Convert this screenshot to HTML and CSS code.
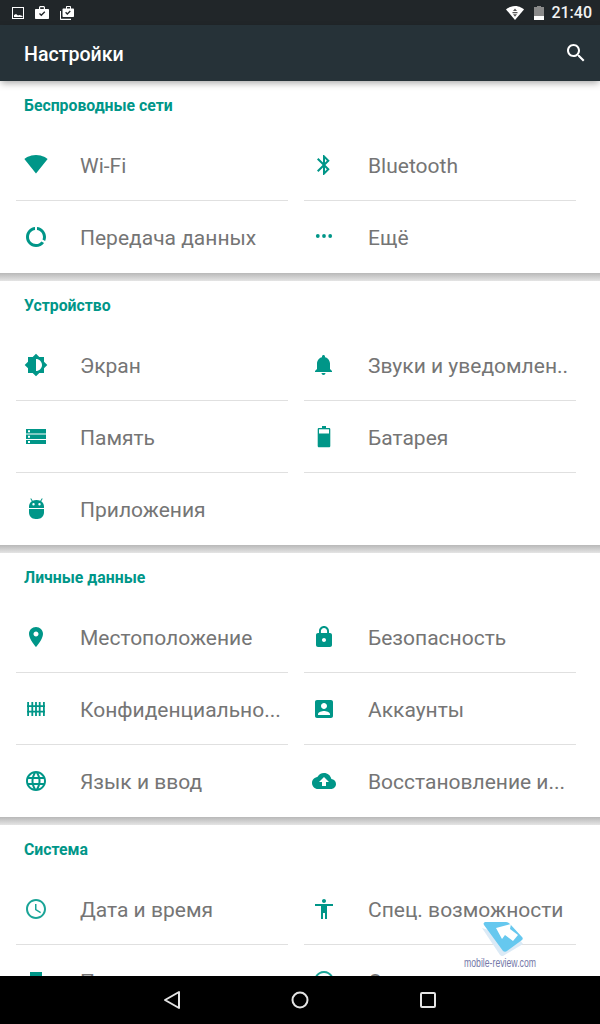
FILE: index.html
```html
<!DOCTYPE html>
<html>

<head>
    <title>Настройки</title>
    <link rel="stylesheet" href="styles.css">
</head>

<body>
    <div id="phone">
        <div class="statusbar">
            <div class="status-left">
                <svg width="12" height="12" viewBox="0 0 12 12"><path class="st-white" fill-rule="evenodd" d="M0 0h12v12H0zM1 1v10h10V1z"/><path class="st-white" d="M2 10V8l2-1 2 1.500 1.500-.5 3 1v1z"/></svg>
                <svg width="14" height="13" viewBox="0 0 14 13"><path class="st-white" fill-rule="evenodd" d="M1 3h3V1.500C4 .7 4.700 0 5.500 0h3C9.300 0 10 .7 10 1.500V3h3c.6 0 1 .4 1 1v8c0 .6-.4 1-1 1H1c-.6 0-1-.4-1-1V4c0-.6.4-1 1-1zm4.200 0h3.600V1.200H5.200z"/><path class="st-check" d="M4.500 7.500L6.300 9.300 9.800 5.800"/></svg>
                <svg width="14" height="14" viewBox="0 0 14 14"><path class="st-white" d="M0 5h1v7.800h10V14H1c-.6 0-1-.4-1-1z"/><path class="st-white" fill-rule="evenodd" d="M3.500 2.500H6V1c0-.6.4-1 1-1h3c.6 0 1 .4 1 1v1.500h2c.6 0 1 .4 1 1V10c0 .6-.4 1-1 1H3.500c-.6 0-1-.4-1-1V3.500c0-.6.4-1 1-1zM7 2.500h3V1.100H7z"/><path class="st-check" d="M5.600 6.300l1.700 1.700 3-3"/></svg>
            </div>
            <div class="status-right">
                <svg width="18" height="14" viewBox="0 0 18 14"><path class="st-white" d="M9 14L0 3.400C1 2.600 4.400 0 9 0s8 2.600 9 3.400z"/><path class="st-dark" d="M9 2.500L11 5H7zM6.500 6h5v1.200h-5zM7 8.200h4L9 10.700z"/></svg>
                <svg class="battery" width="10" height="14" viewBox="0 0 10 14"><path fill="#8a8a8a" d="M3 0h4v1h3v9H0V1h3z"/><path fill="#fff" d="M0 10h10v4H0z"/></svg>
                <span class="clock">21:40</span>
            </div>
        </div>

        <div class="appbar">
            <span class="appbar-title">Настройки</span>
            <svg class="search" width="24" height="24" viewBox="0 0 24 24"><path d="M15.500 14h-.79l-.28-.27C15.410 12.590 16 11.110 16 9.500 16 5.910 13.090 3 9.500 3S3 5.910 3 9.500 5.910 16 9.500 16c1.610 0 3.090-.59 4.230-1.570l.27.28v.79l5 4.990L20.490 19l-4.990-5zm-6 0C7.010 14 5 11.990 5 9.500S7.010 5 9.500 5 14 7.010 14 9.500 11.990 14 9.500 14z"/></svg>
        </div>

        <div class="content">
            <div class="group">
                <div class="group-title">Беспроводные сети</div>
                <div class="rows">
                    <div class="row line">
                        <svg class="icon" viewBox="0 0 24 24"><path d="M12.010 20.490L23.640 6c-.45-.34-4.930-4-11.640-4C5.280 2 .81 5.660.36 6l11.630 14.490.01.01.01-.01z"/></svg>
                        <span class="label">Wi-Fi</span>
                    </div>
                    <div class="row line">
                        <svg class="icon" viewBox="0 0 24 24"><path d="M17.710 7.710L12 2h-1v7.590L6.410 5 5 6.410 10.590 12 5 17.590 6.410 19 11 14.410V22h1l5.710-5.710-4.300-4.290 4.300-4.290zM13 5.830l1.880 1.880L13 9.590V5.830zm1.880 10.460L13 18.170v-3.760l1.880 1.880z"/></svg>
                        <span class="label">Bluetooth</span>
                    </div>
                    <div class="row">
                        <svg class="icon" viewBox="0 0 24 24"><path d="M13 2.050v3.030c3.390.49 6 3.390 6 6.920 0 .9-.18 1.750-.48 2.540l2.600 1.530c.56-1.240.88-2.620.88-4.070 0-5.180-3.950-9.450-9-9.950zM12 19c-3.870 0-7-3.130-7-7 0-3.530 2.610-6.430 6-6.920V2.050c-5.060.5-9 4.760-9 9.950 0 5.520 4.470 10 9.990 10 3.310 0 6.240-1.610 8.060-4.090l-2.600-1.530C16.170 17.980 14.210 19 12 19z"/></svg>
                        <span class="label">Передача данных</span>
                    </div>
                    <div class="row">
                        <svg class="icon" viewBox="0 0 24 24"><circle cx="5.800" cy="11" r="1.900"/><circle cx="12" cy="11" r="1.900"/><circle cx="18.200" cy="11" r="1.900"/></svg>
                        <span class="label">Ещё</span>
                    </div>
                </div>
            </div>
            <div class="shade"></div>

            <div class="group">
                <div class="group-title">Устройство</div>
                <div class="rows">
                    <div class="row line">
                        <svg class="icon" viewBox="0 0 24 24"><path d="M20 15.310L23.310 12 20 8.690V4h-4.690L12 .69 8.690 4H4v4.690L.69 12 4 15.310V20h4.690L12 23.310 15.310 20H20v-4.690zM12 18V6c3.310 0 6 2.690 6 6s-2.690 6-6 6z"/></svg>
                        <span class="label">Экран</span>
                    </div>
                    <div class="row line">
                        <svg class="icon" viewBox="0 0 24 24"><path d="M11.500 22c1.100 0 2-.9 2-2h-4c0 1.100.9 2 2 2zm6.500-6v-5.500c0-3.070-2.130-5.640-5-6.320V3.500c0-.83-.67-1.500-1.500-1.500S10 2.670 10 3.500v.68c-2.870.68-5 3.250-5 6.320V16l-2 2v1h17v-1l-2-2z"/></svg>
                        <span class="label">Звуки и уведомлен..</span>
                    </div>
                    <div class="row line">
                        <svg class="icon" viewBox="0 0 24 24"><path fill-rule="evenodd" d="M2 4h20v4.500H2zm2 1.300v2h2v-2zM2 9.500h20V14H2zm2 1.300v2h2v-2zM2 15h20v4H2zm2 1v2h2v-2z"/></svg>
                        <span class="label">Память</span>
                    </div>
                    <div class="row line">
                        <svg class="icon" viewBox="0 0 24 24"><path d="M10 1h4v2h3c.8 0 1.300.5 1.300 1.300V21c0 .7-.6 1.300-1.300 1.300H7c-.7 0-1.300-.6-1.300-1.300V4.300C5.700 3.500 6.200 3 7 3h3z"/><path fill="#fff" d="M7 4.300h10V8.500H7z"/></svg>
                        <span class="label">Батарея</span>
                    </div>
                    <div class="row">
                        <svg class="icon" viewBox="0 0 24 24"><path d="M5 11v-1.500c0-2.300 1.100-4.200 2.800-5.300L6.300 1.700l.8-.5 1.600 2.500C9.800 3.200 11 3 12.500 3s2.700.2 3.800.7l1.600-2.500.8.5-1.500 2.500C18.900 5.300 20 7.200 20 9.500V11zm4.500-2.500a1.200 1.200 0 1 0 0-2.400 1.200 1.200 0 0 0 0 2.400zm6 0a1.200 1.200 0 1 0 0-2.400 1.200 1.200 0 0 0 0 2.400zM5 12h15v3.500c0 3.600-2.900 6.500-6.500 6.500h-2C7.900 22 5 19.100 5 15.500z"/></svg>
                        <span class="label">Приложения</span>
                    </div>
                </div>
            </div>
            <div class="shade"></div>

            <div class="group">
                <div class="group-title">Личные данные</div>
                <div class="rows">
                    <div class="row line">
                        <svg class="icon" viewBox="0 0 24 24"><path d="M12 2C8.130 2 5 5.130 5 9c0 5.250 7 13 7 13s7-7.750 7-13c0-3.870-3.130-7-7-7zm0 9.500c-1.380 0-2.500-1.120-2.500-2.500s1.120-2.500 2.500-2.500 2.500 1.120 2.500 2.500-1.120 2.500-2.500 2.500z"/></svg>
                        <span class="label">Местоположение</span>
                    </div>
                    <div class="row line">
                        <svg class="icon" viewBox="0 0 24 24"><path d="M18 8h-1V6c0-2.760-2.240-5-5-5S7 3.240 7 6v2H6c-1.100 0-2 .9-2 2v10c0 1.100.9 2 2 2h12c1.100 0 2-.9 2-2V10c0-1.100-.9-2-2-2zm-6 9c-1.100 0-2-.9-2-2s.9-2 2-2 2 .9 2 2-.9 2-2 2zm3.100-9H8.900V6c0-1.710 1.390-3.100 3.100-3.100 1.710 0 3.100 1.390 3.100 3.100v2z"/></svg>
                        <span class="label">Безопасность</span>
                    </div>
                    <div class="row line">
                        <svg class="icon" viewBox="0 0 24 24"><path d="M3.200 5H5v14H3.200zM7.400 5h1.800v14H7.400zM11.100 5h1.800v14h-1.800zM14.800 5h1.800v14h-1.800zM19 5h1.800v14H19zM3 8.300h18v1.800H3zM3 13.700h18v1.800H3z"/></svg>
                        <span class="label">Конфиденциально...</span>
                    </div>
                    <div class="row line">
                        <svg class="icon" viewBox="0 0 24 24"><path d="M3 5v14c0 1.100.89 2 2 2h14c1.100 0 2-.9 2-2V5c0-1.100-.9-2-2-2H5c-1.110 0-2 .9-2 2zm12 4c0 1.660-1.340 3-3 3s-3-1.340-3-3 1.340-3 3-3 3 1.340 3 3zm-9 8c0-2 4-3.100 6-3.100s6 1.100 6 3.100v1H6v-1z"/></svg>
                        <span class="label">Аккаунты</span>
                    </div>
                    <div class="row">
                        <svg class="icon" viewBox="0 0 24 24"><path d="M11.990 2C6.470 2 2 6.480 2 12s4.470 10 9.990 10C17.520 22 22 17.520 22 12S17.520 2 11.990 2zm6.930 6h-2.950c-.32-1.250-.78-2.450-1.380-3.560 1.840.63 3.370 1.910 4.330 3.560zM12 4.040c.83 1.200 1.480 2.530 1.910 3.960h-3.820c.43-1.430 1.080-2.760 1.910-3.960zM4.260 14C4.100 13.360 4 12.690 4 12s.1-1.360.26-2h3.380c-.08.66-.14 1.320-.14 2 0 .68.06 1.340.14 2H4.260zm.82 2h2.950c.32 1.250.78 2.450 1.380 3.560-1.840-.63-3.370-1.900-4.330-3.560zm2.950-8H5.080c.96-1.660 2.490-2.930 4.330-3.560C8.810 5.550 8.350 6.750 8.030 8zM12 19.960c-.83-1.200-1.480-2.530-1.910-3.960h3.820c-.43 1.430-1.080 2.760-1.910 3.960zM14.340 14H9.660c-.09-.66-.16-1.320-.16-2 0-.68.07-1.350.16-2h4.680c.09.65.16 1.320.16 2 0 .68-.07 1.340-.16 2zm.25 5.560c.6-1.110 1.060-2.310 1.380-3.560h2.950c-.96 1.650-2.490 2.930-4.330 3.560zM16.360 14c.08-.66.14-1.320.14-2 0-.68-.06-1.340-.14-2h3.380c.16.64.26 1.310.26 2s-.1 1.360-.26 2h-3.380z"/></svg>
                        <span class="label">Язык и ввод</span>
                    </div>
                    <div class="row">
                        <svg class="icon" viewBox="0 0 24 24"><path d="M19.350 10.040C18.670 6.590 15.640 4 12 4 9.110 4 6.600 5.640 5.350 8.040 2.340 8.360 0 10.910 0 14c0 3.310 2.690 6 6 6h13c2.760 0 5-2.240 5-5 0-2.640-2.050-4.780-4.650-4.960zM14 13v4h-4v-4H7l5-5 5 5h-3z"/></svg>
                        <span class="label">Восстановление и...</span>
                    </div>
                </div>
            </div>
            <div class="shade"></div>

            <div class="group">
                <div class="group-title">Система</div>
                <div class="rows">
                    <div class="row line">
                        <svg class="icon icon-thin" viewBox="0 0 24 24"><path d="M11.990 2C6.470 2 2 6.480 2 12s4.470 10 9.990 10C17.520 22 22 17.520 22 12S17.520 2 11.990 2zM12 20c-4.420 0-8-3.580-8-8s3.580-8 8-8 8 3.580 8 8-3.580 8-8 8z"/><path d="M12.500 7H11v6l5.250 3.150.75-1.230-4.500-2.670z"/></svg>
                        <span class="label">Дата и время</span>
                    </div>
                    <div class="row line">
                        <svg class="icon" viewBox="0 0 24 24"><path d="M12 2c1.100 0 2 .9 2 2s-.9 2-2 2-2-.9-2-2 .9-2 2-2zm9 7h-6v13h-2v-6h-2v6H9V9H3V7h18v2z"/></svg>
                        <span class="label">Спец. возможности</span>
                    </div>
                    <div class="row">
                        <svg class="icon" viewBox="0 0 24 24"><path d="M19 8H5c-1.660 0-3 1.340-3 3v6h4v4h12v-4h4v-6c0-1.660-1.340-3-3-3zm-3 11H8v-5h8v5zm3-7c-.55 0-1-.45-1-1s.45-1 1-1 1 .45 1 1-.45 1-1 1zm-1-9H6v4h12V3z"/></svg>
                        <span class="label">Печать</span>
                    </div>
                    <div class="row">
                        <svg class="icon icon-thin" viewBox="0 0 24 24"><path d="M11 17h2v-6h-2v6zm1-15C6.480 2 2 6.480 2 12s4.480 10 10 10 10-4.480 10-10S17.520 2 12 2zm0 18c-4.410 0-8-3.590-8-8s3.590-8 8-8 8 3.590 8 8-3.590 8-8 8zM11 9h2V7h-2v2z"/></svg>
                        <span class="label">О планшете</span>
                    </div>
                </div>
            </div>
        </div>

        <div class="navbar">
            <svg width="20" height="20" viewBox="0 0 20 20"><path class="nav-stroke" d="M17 2v16L3 10z"/></svg>
            <svg width="20" height="20" viewBox="0 0 20 20"><circle class="nav-stroke" cx="10" cy="10" r="7.500"/></svg>
            <svg width="20" height="20" viewBox="0 0 20 20"><rect class="nav-stroke" x="3" y="3" width="14" height="14" rx="1"/></svg>
        </div>

        <svg class="watermark" width="130" height="60" viewBox="0 0 130 60">
            <path fill="#dbeaf6" d="M22 13l18 27c1 1 2 1 3 1l20-12-3-4z"/>
            <path fill="#66c8ef" d="M26 7h20c2 0 3 1 4 2l12 13c1 1 1 2 0 3L47 36c-1 1-3 1-4 0L24 10c-1-2 0-3 2-3z"/>
            <path fill="#fff" d="M36 13l15-4-1 5 8 6-5 6-8-6-3 4z"/>
            <text class="watermark-text" x="4" y="52" textLength="72" lengthAdjust="spacingAndGlyphs">mobile-review.com</text>
        </svg>
    </div>
</body>
</html>
```

FILE: styles.css
```css
body {
    margin: 0;
    font-family: Roboto, "Noto Sans", sans-serif;
    background-color: #fff;
}

#phone {
    position: relative;
    display: flex;
    flex-direction: column;
    width: 600px;
    height: 1024px;
    overflow: hidden;
}

.statusbar {
    display: flex;
    flex: none;
    justify-content: space-between;
    align-items: center;
    height: 25px;
    padding: 0 8px 0 12px;
    background-color: #212629;
}

.status-left {
    display: flex;
    align-items: center;
    gap: 11px;
}

.status-right {
    display: flex;
    align-items: center;
}

.st-white {
    fill: #fff;
}

.st-dark {
    fill: #555;
}

.st-check {
    fill: none;
    stroke: #212629;
    stroke-width: 1.3;
}

.battery {
    margin: 0 7px 0 10px;
}

.clock {
    color: #f2f2f2;
    font-size: 16px;
    font-weight: 500;
}

.appbar {
    position: relative;
    z-index: 2;
    display: flex;
    flex: none;
    justify-content: space-between;
    align-items: center;
    height: 56px;
    padding: 0 12px 0 24px;
    background-color: #263238;
    box-shadow: 0 3px 7px -1px rgba(0, 0, 0, 0.35);
}

.appbar-title {
    padding-top: 2px;
    color: #fff;
    font-size: 19.6px;
    font-weight: 500;
}

.search {
    fill: #fff;
}

.content {
    flex: 1;
    overflow: hidden;
    min-height: 0;
}

.group {
    background-color: #fff;
}

.group-title {
    height: 48px;
    padding-left: 24px;
    color: #009688;
    font-size: 15.8px;
    font-weight: 700;
    line-height: 50px;
}

.rows {
    display: grid;
    grid-template-columns: 272px 272px;
    column-gap: 16px;
    padding: 0 24px 0 16px;
}

.row {
    display: flex;
    align-items: center;
    box-sizing: border-box;
    height: 72px;
}

.row.line {
    border-bottom: 1px solid #e0e0e0;
}

.icon {
    flex: none;
    width: 24px;
    height: 24px;
    margin: 0 32px 0 8px;
    fill: #009688;
}

.icon-thin {
    fill: #1aa497;
}

.label {
    padding-top: 2px;
    color: #757575;
    font-size: 21px;
    white-space: nowrap;
}

.shade {
    height: 8px;
    background: linear-gradient(#b8b8b8, #e4e4e4);
}

.navbar {
    display: flex;
    flex: none;
    justify-content: center;
    align-items: center;
    gap: 108px;
    height: 48px;
    background-color: #000;
}

.nav-stroke {
    fill: none;
    stroke: #e4e4e4;
    stroke-width: 2;
    stroke-linejoin: round;
}

.watermark {
    position: absolute;
    left: 460px;
    top: 915px;
}

.watermark-text {
    fill: #7478a8;
    font-family: "Liberation Sans", sans-serif;
    font-size: 13px;
}
```
